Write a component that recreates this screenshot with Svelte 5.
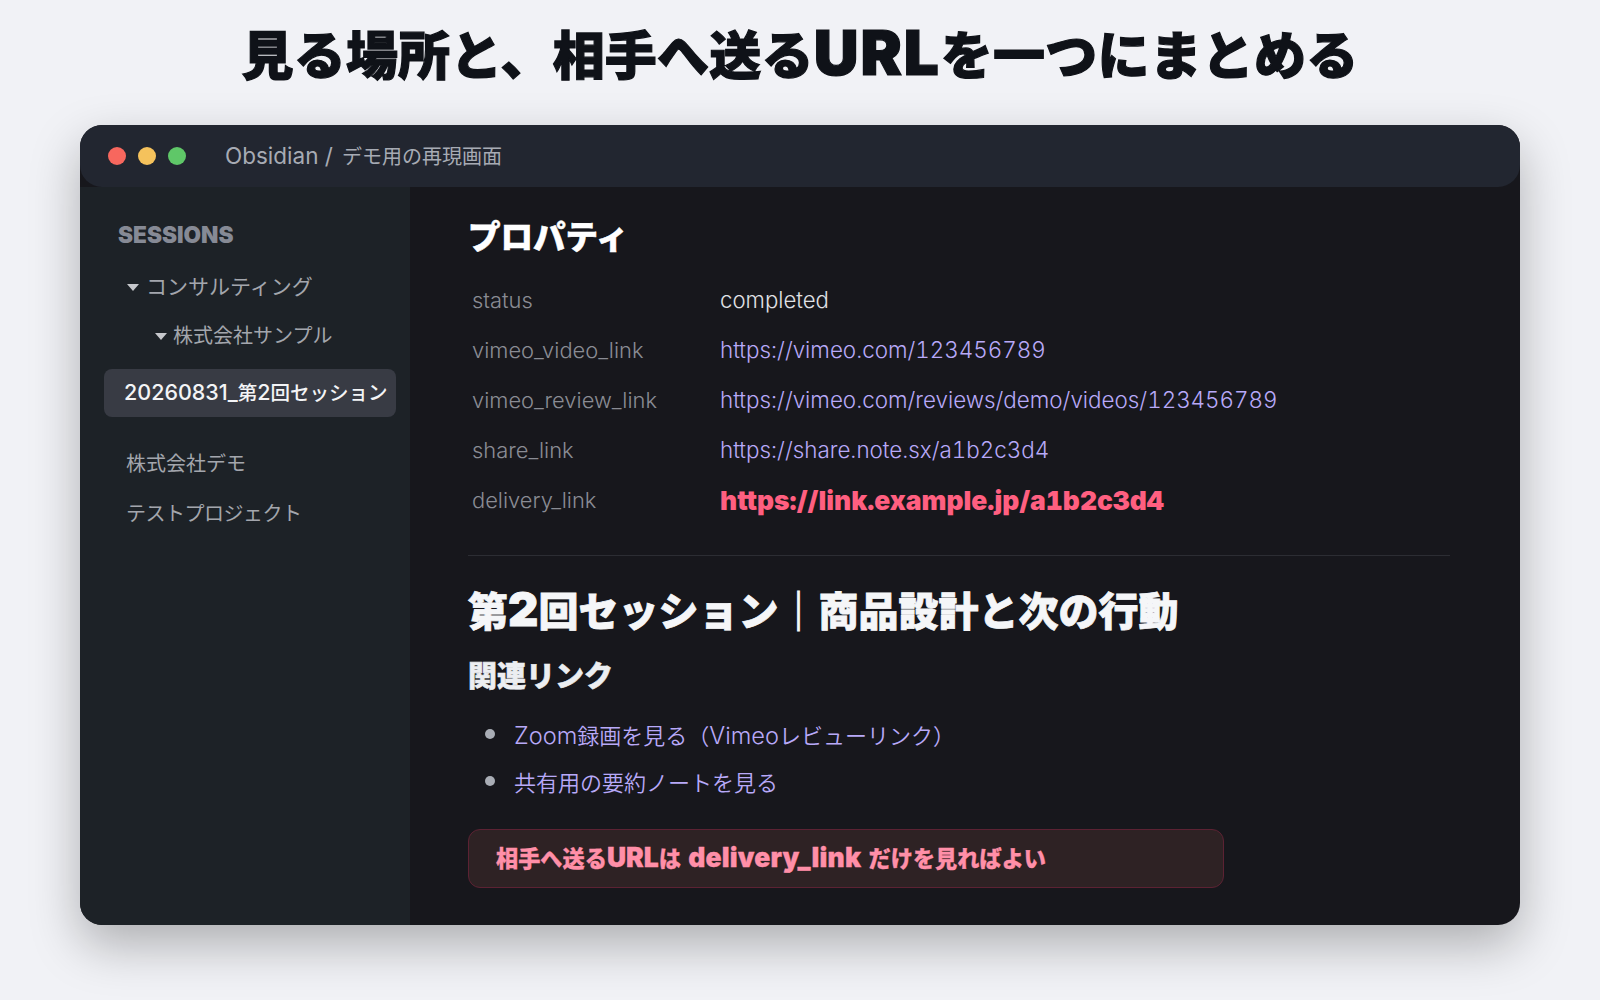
<script>
  const props = [
    { k: 'status', v: 'completed', c: 'plain' },
    { k: 'vimeo_video_link', v: 'https://vimeo.com/123456789', c: 'link' },
    { k: 'vimeo_review_link', v: 'https://vimeo.com/reviews/demo/videos/123456789', c: 'link' },
    { k: 'share_link', v: 'https://share.note.sx/a1b2c3d4', c: 'link' },
    { k: 'delivery_link', v: 'https://link.example.jp/a1b2c3d4', c: 'hot' }
  ];
</script>

<div class="page">
  <h1 class="headline">見る場所と、相手へ送る<span class="lat">URL</span>を一つにまとめる</h1>
  <div class="window">
    <header class="titlebar">
      <span class="dot red"></span><span class="dot yellow"></span><span class="dot green"></span>
      <span class="wintitle"><span class="lat">Obsidian /</span>デモ用の再現画面</span>
    </header>
    <div class="body">
      <aside class="sidebar">
        <div class="sessions">SESSIONS</div>
        <div class="tree lvl1"><span class="caret"></span>コンサルティング</div>
        <div class="tree lvl2"><span class="caret"></span>株式会社サンプル</div>
        <div class="active"><span class="lat">20260831_</span>第<span class="lat">2</span>回セッション</div>
        <div class="tree plain first">株式会社デモ</div>
        <div class="tree plain tight">テストプロジェクト</div>
      </aside>
      <main class="content">
        <h2 class="proptitle">プロパティ</h2>
        <div class="props">
          {#each props as p}
            <div class="key">{p.k}</div>
            <div class="val {p.c}">{p.v}</div>
          {/each}
        </div>
        <hr />
        <h1 class="doctitle">第<span class="lat">2</span>回セッション｜商品設計と次の行動</h1>
        <h2 class="sub">関連リンク</h2>
        <ul>
          <li><span><span class="lat">Zoom</span>録画を見る（<span class="lat">Vimeo</span>レビューリンク）</span></li>
          <li><span>共有用の要約ノートを見る</span></li>
        </ul>
        <div class="callout">相手へ送る<span class="lat">URL</span>は <span class="lat word">delivery_link</span> だけを見ればよい</div>
      </main>
    </div>
  </div>
</div>

<style>
  :global(body) {
    margin: 0;
    background: #f1f2f6;
    font-family: Inter, "Noto Sans CJK JP", sans-serif;
  }
  .page {
    width: 1600px;
    height: 1000px;
    box-sizing: border-box;
    padding-top: 20px;
    overflow: hidden;
  }
  .headline {
    margin: 0 0 30px;
    height: 75px;
    line-height: 74px;
    font-size: 52px;
    font-weight: 900;
    color: #0f1218;
    text-align: center;
    letter-spacing: 0.2px;
    -webkit-text-stroke: 1.2px #0f1218;
  }
  .headline .lat { font-size: 62px; line-height: 0; letter-spacing: 2px; }
  .window {
    width: 1440px;
    height: 800px;
    margin-left: 80px;
    background: #17171c;
    border-radius: 22px;
    box-shadow: 0 20px 50px rgba(0, 0, 0, 0.28);
    display: flex;
    flex-direction: column;
  }
  .titlebar {
    height: 62px;
    flex: none;
    background: #222630;
    border-radius: 22px;
    display: flex;
    align-items: center;
    padding-left: 28px;
    gap: 12px;
  }
  .dot { width: 18px; height: 18px; border-radius: 50%; }
  .red { background: #f7675e; }
  .yellow { background: #f5c25c; }
  .green { background: #5fc768; }
  .wintitle { margin-left: 27px; padding-bottom: 2px; font-size: 20px; color: #a7abb4; }
  .wintitle .lat { font-size: 22.5px; line-height: 0; margin-right: 9px; }
  .body { flex: 1; display: flex; min-height: 0; }
  .sidebar {
    width: 330px;
    flex: none;
    box-sizing: border-box;
    background: #1d2227;
    border-bottom-left-radius: 22px;
    padding: 34px 14px 0 24px;
  }
  .sessions {
    margin-left: 14px;
    height: 28px;
    line-height: 28px;
    font-size: 22.6px;
    font-weight: 900;
    color: #868a95;
  }
  .tree {
    font-size: 21px;
    color: #a3a6ad;
    height: 30px;
    line-height: 30px;
    display: flex;
    align-items: center;
  }
  .lvl1 { margin-top: 23px; margin-left: 23px; }
  .lvl2 { margin-top: 19px; margin-left: 51px; font-size: 20px; }
  .caret {
    width: 0;
    height: 0;
    border-left: 6px solid transparent;
    border-right: 6px solid transparent;
    border-top: 7px solid #c6c8cc;
    margin-right: 7px;
  }
  .lvl2 .caret { margin-right: 6px; }
  .active {
    margin-top: 18px;
    height: 48px;
    line-height: 48px;
    width: 292px;
    box-sizing: border-box;
    padding-left: 20px;
    background: #383b44;
    border-radius: 8px;
    color: #f3f4f6;
    font-size: 19.5px;
    font-weight: 500;
    white-space: nowrap;
    overflow: hidden;
  }
  .active .lat { font-size: 21.5px; line-height: 0; }
  .plain { margin-left: 22px; font-size: 20px; margin-top: 20px; }
  .plain.first { margin-top: 32px; }
  .tight { letter-spacing: -0.5px; }
  .content {
    flex: 1;
    min-width: 0;
    padding: 29px 70px 0 58px;
  }
  .proptitle {
    margin: 0;
    height: 44px;
    line-height: 44px;
    font-size: 32.5px;
    font-weight: 900;
    color: #fff;
    -webkit-text-stroke: 0.6px #fff;
  }
  .props {
    margin-top: 15px;
    padding-left: 4px;
    display: grid;
    grid-template-columns: 248px 1fr;
    grid-auto-rows: 50px;
    align-items: center;
    font-size: 21.9px;
    font-weight: 350;
    font-variant-numeric: tabular-nums;
  }
  .key { color: #8a8c94; }
  .val.plain { margin: 0; font-size: 22.2px; height: auto; display: block; padding-bottom: 2px; color: #e0e1e5; }
  .val.link { color: #b8a9f8; font-size: 22.4px; padding-bottom: 2px; }
  .val.hot { color: #ff5f80; font-weight: 900; font-size: 26.4px; }
  hr {
    margin: 30px 0 0;
    border: 0;
    height: 1px;
    background: #2c2d33;
  }
  .doctitle {
    margin: 28px 0 0;
    height: 56px;
    line-height: 56px;
    font-size: 40px;
    font-weight: 900;
    color: #f5f6f8;
    white-space: nowrap;
    -webkit-text-stroke: 0.8px #f5f6f8;
  }
  .doctitle .lat { font-size: 47px; line-height: 0; }
  .sub {
    margin: 15px 0 0;
    height: 44px;
    line-height: 44px;
    font-size: 29px;
    font-weight: 900;
    color: #eceef1;
    -webkit-text-stroke: 0.6px #eceef1;
  }
  ul { margin: 11px 0 0; padding: 0; list-style: none; color: #b8a9f8; font-size: 22px; font-weight: 350; }
  li { height: 47px; display: flex; align-items: center; padding-left: 17px; gap: 19px; }
  li .lat { font-size: 23.6px; line-height: 0; }
  li::before {
    content: "";
    width: 10px;
    height: 10px;
    border-radius: 50%;
    background: #a9adb5;
    flex: none;
  }
  .callout {
    margin-top: 25px;
    width: 756px;
    height: 59px;
    box-sizing: border-box;
    line-height: 57px;
    padding-left: 27px;
    background: #2e2224;
    border: 1.5px solid #5c2233;
    border-radius: 12px;
    color: #ff8fa8;
    font-size: 22.2px;
    font-weight: 900;
    -webkit-text-stroke: 0.3px #ff8fa8;
  }
  .callout .lat { font-size: 26.5px; line-height: 0; }
  .callout .word { margin: 0 3px; letter-spacing: 0.15px; }
</style>
